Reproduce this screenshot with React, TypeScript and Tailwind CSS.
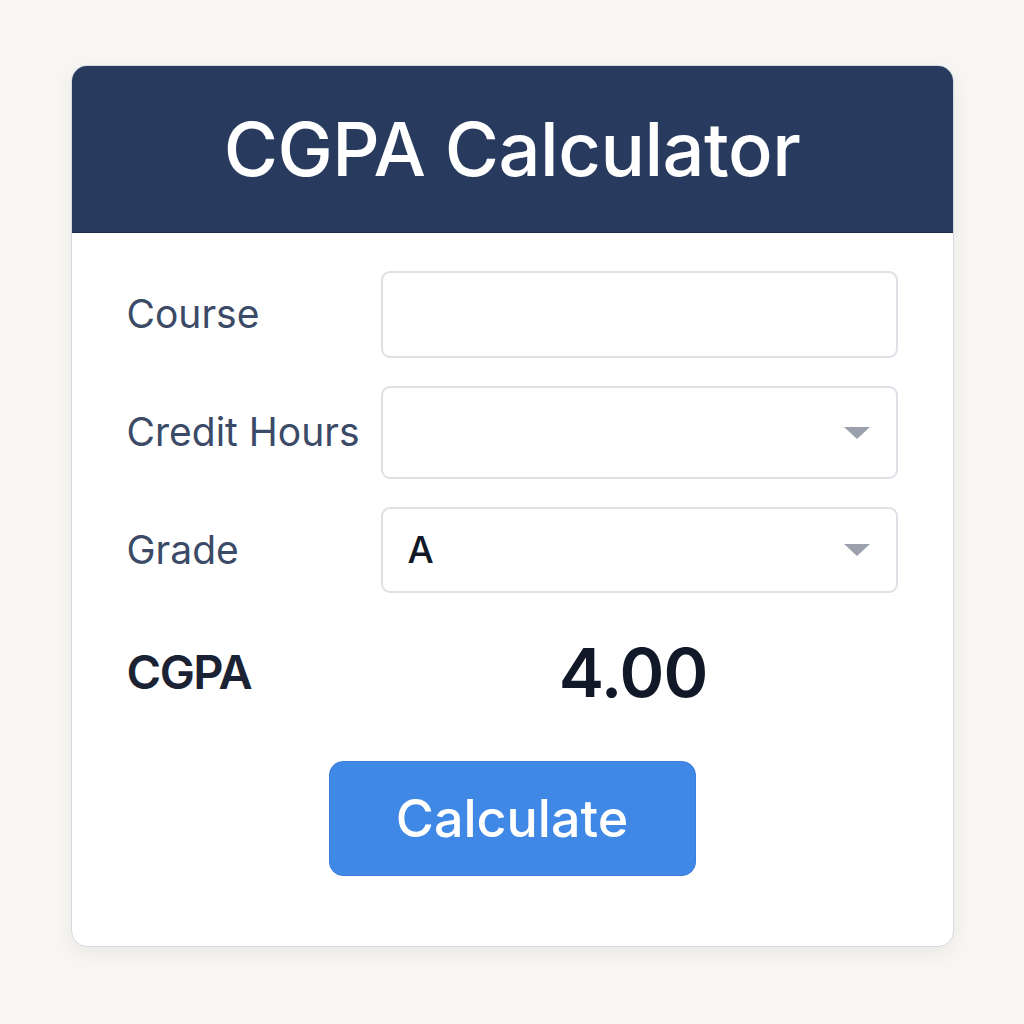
import React from 'react';

const Caret = () => (
  <svg width="26" height="12" viewBox="0 0 26 12" className="absolute right-[26px] top-1/2 -translate-y-1/2">
    <path d="M0 0 H26 L13 12 Z" fill="#9ba1ac" />
  </svg>
);

const App = () => {
  return (
    <div className="min-h-screen bg-[#f7f6f3] pt-[65px]" style={{ fontFamily: 'Inter, "Noto Sans", sans-serif' }}>
      <div className="mx-auto w-[883px] h-[882px] overflow-hidden rounded-[16px] border border-[#d6dae0] bg-white shadow-[0_6px_20px_rgba(0,0,0,0.06)]">
        <div className="flex h-[167px] items-center justify-center bg-[#283a5e] border-b border-[#1c2a48]">
          <h1 className="text-[74px] font-medium tracking-[-0.5px] text-white">CGPA Calculator</h1>
        </div>

        <div className="px-[55px] pt-[38px]">
          <div className="grid grid-cols-[254px_1fr] items-center gap-y-[28px]">
            <label className="text-[39px] text-[#3b4a66]">Course</label>
            <div className="h-[87px] rounded-[9px] border-2 border-[#dde1e6] bg-white" />

            <label className="text-[39px] text-[#3b4a66] whitespace-nowrap">Credit Hours</label>
            <div className="relative h-[93px] rounded-[9px] border-2 border-[#dde1e6] bg-white">
              <Caret />
            </div>

            <label className="text-[39px] text-[#3b4a66]">Grade</label>
            <div className="relative flex h-[86px] items-center rounded-[9px] border-2 border-[#dde1e6] bg-white pl-[25px]">
              <span className="text-[37px] font-medium text-[#111827]">A</span>
              <Caret />
            </div>
          </div>

          <div className="mt-[28px] grid grid-cols-[254px_1fr] items-center">
            <span className="text-[47px] font-semibold tracking-[-1.5px] text-[#1a2233]">CGPA</span>
            <span className="text-center text-[68px] font-semibold tracking-[-1px] text-[#111827] -ml-[12px]">4.00</span>
          </div>

          <div className="mt-[38px] flex justify-center">
            <button className="h-[115px] w-[367px] rounded-[14px] border border-[#3a7fdc] bg-[#3f88e5] text-[52px] font-medium text-white">
              Calculate
            </button>
          </div>
        </div>
      </div>
    </div>
  );
};

export default App;
